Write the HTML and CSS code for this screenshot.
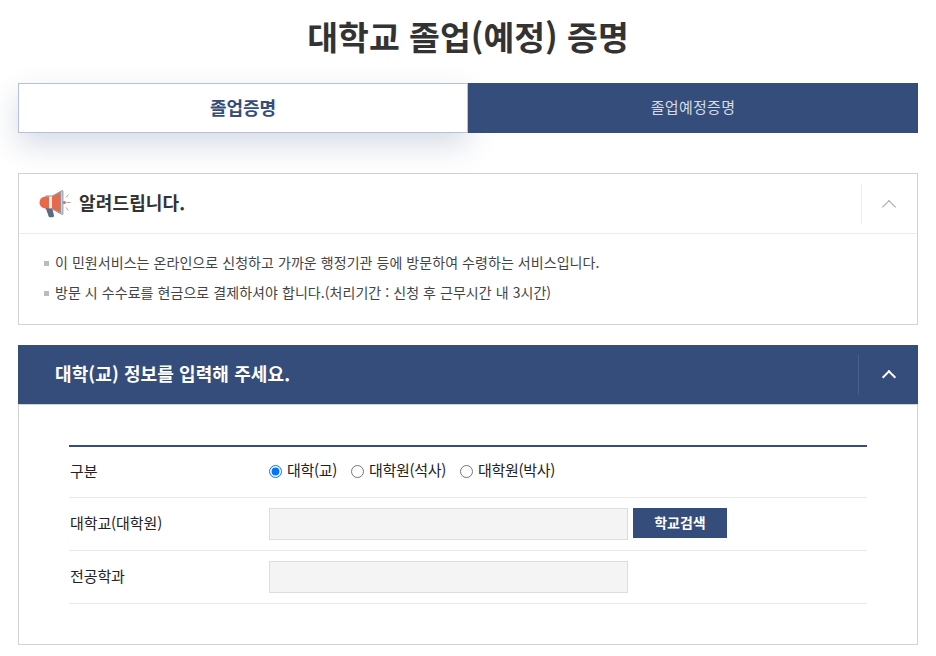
FILE: index.html
```html
<!DOCTYPE html>
<html lang="ko">
<head>
<meta charset="utf-8">
<title>대학교 졸업(예정) 증명</title>
<link rel="stylesheet" href="styles.css">
</head>
<body>
<h1 class="title">대학교 졸업(예정) 증명</h1>
<div class="tabs">
  <div class="tab tab-on">졸업증명</div>
  <div class="tab tab-off">졸업예정증명</div>
</div>
<section class="notice">
  <header class="notice-head">
    <svg class="horn" viewBox="0 0 32 28" width="32" height="28" aria-hidden="true">
      <path d="M6.500 17.500h6.500l2 8a1.500 1.500 0 0 1-1.500 1.800h-2.500a1.500 1.500 0 0 1-1.500-1.200z" fill="#5d6b7e"/>
      <path d="M6.500 6.500h3.500v12h-3.500a6 6 0 0 1 0-12z" fill="#e8694a"/>
      <path d="M10 6.500h3v12h-3z" fill="#f3efec"/>
      <path d="M13 6.500L21.500 2v21L13 18.500z" fill="#e8694a"/>
      <path d="M6.500 6h6.700L21.500 1.500M6.500 19h6.700l8.300 4.500" fill="none" stroke="#6c7683" stroke-width=".8"/>
      <path d="M21.500 1.300l1.700-.8a.6.600 0 0 1 .8.500v23a.6.600 0 0 1-.8.500l-1.700-.8z" fill="#c9ced5" stroke="#6c7683" stroke-width=".6"/>
      <circle cx="25.300" cy="12.500" r="1.500" fill="#e8694a"/>
      <path d="M27 7.500l2.500-3M27.500 12.500h4M27 17.500l2.500 3" stroke="#9aa3ae" stroke-width="1" fill="none"/>
    </svg>
    <h2 class="notice-title">알려드립니다.</h2>
    <div class="toggle toggle-light"><span class="chev"></span></div>
  </header>
  <ul class="notice-list">
    <li>이 민원서비스는 온라인으로 신청하고 가까운 행정기관 등에 방문하여 수령하는 서비스입니다.</li>
    <li>방문 시 수수료를 현금으로 결제하셔야 합니다.(처리기간 : 신청 후 근무시간 내 3시간)</li>
  </ul>
</section>
<section class="panel">
  <header class="panel-head">
    <h2 class="panel-title">대학(교) 정보를 입력해 주세요.</h2>
    <div class="toggle toggle-dark"><span class="chev"></span></div>
  </header>
  <div class="panel-body">
    <div class="form">
      <div class="row">
        <div class="label">구분</div>
        <div class="field radios">
          <label class="radio"><input type="radio" name="k" checked>대학(교)</label>
          <label class="radio"><input type="radio" name="k">대학원(석사)</label>
          <label class="radio"><input type="radio" name="k">대학원(박사)</label>
        </div>
      </div>
      <div class="row">
        <div class="label">대학교(대학원)</div>
        <div class="field field-top">
          <input class="text" type="text" disabled>
          <button class="search" type="button">학교검색</button>
        </div>
      </div>
      <div class="row">
        <div class="label">전공학과</div>
        <div class="field field-top">
          <input class="text" type="text" disabled>
        </div>
      </div>
    </div>
  </div>
</section>
</body>
</html>
```
FILE: styles.css
```css
* { box-sizing: border-box; }
html, body { margin: 0; padding: 0; }
body {
  width: 936px;
  height: 656px;
  overflow: hidden;
  padding: 0 18px;
  background: #fff;
  color: #222;
  font-family: "Noto Sans CJK KR", "Noto Sans", sans-serif;
  font-size: 14px;
}
.title {
  margin: 0;
  height: 83px;
  padding-top: 11px;
  text-align: center;
  font-size: 33.500px;
  line-height: 50px;
  font-weight: 700;
  color: #333;
}
.tabs { display: flex; height: 50px; }
.tab {
  width: 50%;
  display: flex;
  align-items: center;
  justify-content: center;
  padding-bottom: 3px;
}
.tab-on {
  background: #fff;
  border: 1px solid #b4c0dc;
  color: #344d7a;
  font-weight: 700;
  font-size: 18px;
  box-shadow: 0 12px 30px rgba(52, 77, 122, .2);
}
.tab-off { background: #344d7a; color: #d5dbe6; font-size: 15px; letter-spacing: .3px; }
.notice {
  margin-top: 40px;
  border: 1px solid #d2d2d2;
  height: 152px;
}
.notice-head {
  display: flex;
  align-items: center;
  height: 60px;
  padding-left: 20px;
  border-bottom: 1px solid #ececec;
}
.horn { flex: none; margin-right: 8px; }
.notice-title {
  flex: 1;
  margin: -4px 0 0;
  font-size: 18px;
  font-weight: 700;
  letter-spacing: .15px;
  color: #333;
}
.toggle {
  flex: none;
  height: 40px;
  display: flex;
  align-items: center;
  justify-content: center;
}
.toggle-light { width: 56px; border-left: 1px solid #eee; padding-right: 2px; }
.toggle-dark { width: 60px; border-left: 1px solid #4a6089; }
.chev {
  display: block;
  width: 10px;
  height: 10px;
  margin-top: 6px;
  transform: rotate(45deg);
  border-left: 1px solid #a4a8ae;
  border-top: 1px solid #a4a8ae;
}
.toggle-dark .chev { border-color: #fff; border-width: 2px 0 0 2px; margin-top: 5px; }
.notice-list {
  margin: 0;
  padding: 15px 0 0 25px;
  list-style: none;
  font-size: 14px;
  letter-spacing: .06px;
  color: #444;
}
.notice-list li {
  position: relative;
  height: 30px;
  line-height: 26px;
  padding-left: 11px;
}
.notice-list li::before {
  content: "";
  position: absolute;
  left: 0;
  top: 12px;
  width: 5px;
  height: 5px;
  background: #bbb;
}
.panel {
  margin-top: 20px;
  height: 300px;
  border: 1px solid #d2d2d2;
  border-top: 0;
}
.panel-head {
  display: flex;
  align-items: center;
  height: 60px;
  margin: 0 -1px;
  padding-left: 37px;
  background: #344d7a;
  border-bottom: 1px solid #d2d2d2;
}
.panel-title {
  flex: 1;
  margin: -4px 0 0;
  color: #fff;
  font-size: 18px;
  font-weight: 700;
  letter-spacing: .1px;
}
.panel-body { padding: 40px 50px 0; }
.form { border-top: 2px solid #344d7a; }
.row {
  display: flex;
  align-items: center;
  height: 53px;
  border-bottom: 1px solid #eaeaea;
}
.row:first-child { height: 51px; }
.label {
  width: 200px;
  padding: 0 0 4px 1px;
  font-size: 15px;
  letter-spacing: -.1px;
  color: #222;
}
.field { display: flex; align-items: center; }
.field-top { align-items: flex-start; }
.radios { gap: 14px; }
.radio {
  display: flex;
  align-items: center;
  font-size: 15px;
  letter-spacing: -.3px;
  line-height: 22px;
}
.radio input { margin: 3px 5px 0 0; width: 13px; height: 13px; flex: none; }
.radios .radio { padding-bottom: 4px; }
.text {
  width: 359px;
  height: 32px;
  background: #f4f4f4;
  border: 1px solid #ddd;
  padding: 0;
}
.search {
  width: 94px;
  height: 30px;
  margin-left: 5px;
  padding: 0 0 2px;
  border: 0;
  background: #344d7a;
  color: #fff;
  font-family: inherit;
  font-size: 14px;
  font-weight: 700;
}
```
